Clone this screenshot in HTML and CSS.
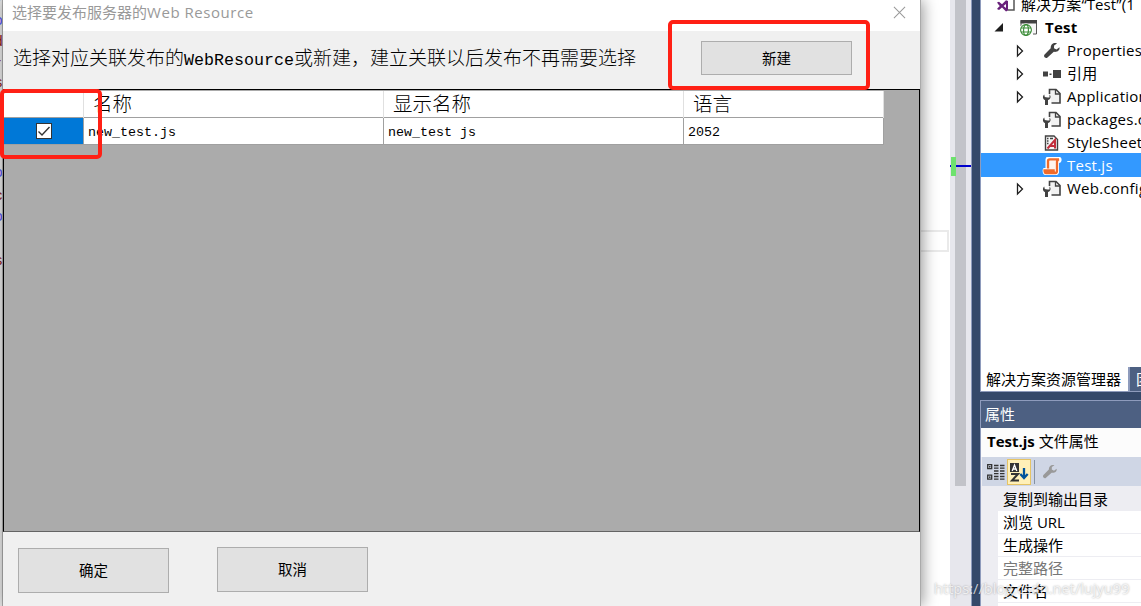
FILE: index.html
```
<!DOCTYPE html>
<html lang="zh-CN">
<head>
    <meta charset="UTF-8">
    <meta name="viewport" content="width=device-width, initial-scale=1.0">
    <title>Web Resource</title>
    <link rel="stylesheet" href="styles.css">
</head>
<body>
    <!-- shared icons -->
    <svg class="defs" width="0" height="0">
        <symbol id="arrow" viewBox="0 0 8 14"><path d="M1.500 2v10L6.500 7z" fill="#fff" stroke="#1e1e1e" stroke-width="1.300"/></symbol>
        <symbol id="wrench" viewBox="0 0 18 18"><path d="M16.500 5.300l-3 2.200-2.500-1.300.1-2.800L14 1.500c-3-1.300-6.500.8-6.300 4.700L1.600 12.500c-1.600 1.700.8 4.700 2.900 2.900l6.300-5.600c3.500.5 6.200-1.300 5.700-4.500z" fill="currentColor"/></symbol>
        <symbol id="config" viewBox="0 0 20 18">
            <path d="M7.500 6V1.500h6.500l4 4v9.500H9.500" fill="#f2f2f2" stroke="#424242" stroke-width="1.600"/>
            <path d="M13.500 1.500V6H18" fill="none" stroke="#424242" stroke-width="1.300"/>
            <path d="M2.200 6.500C0 8.500 1 11.500 3 12v5h3v-5c2.500-.5 3.500-3.500 1.500-5.500V9.500H5.800L4 9.300 2.800 9z" fill="#424242"/>
        </symbol>
    </svg>

    <div class="screen">
        <div class="code-left">
            <i class="red" style="top:-10px">v</i>
            <i class="blue" style="top:13px">o</i>
            <i class="red" style="top:34px">d</i>
            <i class="red" style="top:53px">-</i>
            <i class="red" style="top:75px">s</i>
            <i class="blue" style="top:165px">o</i>
            <i class="red" style="top:188px">c</i>
            <i class="blue" style="top:209px">o</i>
            <i class="red" style="top:253px">s</i>
        </div>

        <div class="dialog">
            <div class="titlebar">
                <span class="title">选择要发布服务器的<span class="title-en">Web Resource</span></span>
                <svg class="close" viewBox="0 0 14 14"><path d="M1 1l12 12M13 1L1 13" stroke="#999" stroke-width="1.100"/></svg>
            </div>
            <div class="toolbar">
                <span class="hint">选择对应关联发布的<span class="hint-en">WebResource</span>或新建，建立关联以后发布不再需要选择</span>
                <button class="btn btn-new">新建</button>
            </div>
            <div class="data-area">
                <table class="grid">
                    <tr><th class="check-col"></th><th>名称</th><th>显示名称</th><th class="lang-col">语言</th></tr>
                    <tr>
                        <td class="selected"><span class="checkbox"><svg viewBox="0 0 14 14"><path d="M1.500 7.500l3.500 3.500 7.500-8" fill="none" stroke="#333" stroke-width="1.400"/></svg></span></td>
                        <td>new_test.js</td><td>new_test js</td><td>2052</td>
                    </tr>
                </table>
            </div>
            <div class="footer">
                <button class="btn btn-ok">确定</button>
                <button class="btn btn-cancel">取消</button>
            </div>
        </div>

        <div class="editor">
            <div class="editor-page"><div class="current-line"></div></div>
            <div class="scrollbar"><div class="thumb"></div><div class="caret-mark"></div><div class="change-mark"></div></div>
        </div>
        <div class="splitter"></div>

        <div class="side">
            <div class="tree">
                <div class="node root">
                    <svg class="icon-vs" viewBox="0 0 20 18"><path d="M7 1.500h11V14h-6" fill="#fff" stroke="#555" stroke-width="1.500"/><path d="M1 6.500l2-.8 3 2.500 4-4 2 .8v9.500l-2 1-4-4-3 2.500-2-1 2.500-3z" fill="#68217a"/><path d="M2.300 8.700v2.600L3.700 10zM7.500 10l2.500 2V8z" fill="#fff"/></svg>
                    <span>解决方案“Test”(1</span>
                </div>
                <div class="node project">
                    <svg class="arrow-open" viewBox="0 0 9 9"><path d="M9 0v8.500H.5z" fill="#1e1e1e"/></svg>
                    <svg class="icon-web" viewBox="0 0 20 18"><path d="M2 7V1.500h15.500V15H14" fill="#f5f5f5" stroke="#555" stroke-width="1"/><path d="M1.500 1H18v3.500H1.500z" fill="#424242"/><circle cx="7" cy="11" r="6.500" fill="#fff"/><g fill="none" stroke="#388a34" stroke-width="1.100"><circle cx="7" cy="11" r="5.400"/><ellipse cx="7" cy="11" rx="2.400" ry="5.400"/><path d="M2 9h10M2 13h10"/></g></svg>
                    <b>Test</b>
                </div>
                <div class="node"><svg class="arrow"><use href="#arrow"/></svg><svg class="icon dark"><use href="#wrench"/></svg><span>Properties</span></div>
                <div class="node"><svg class="arrow"><use href="#arrow"/></svg><svg class="icon" viewBox="0 0 20 18"><path d="M1 6.500h5v5H1zM7.500 8.500h2v1.500h-2zM11 5h8v8h-8z" fill="#424242"/></svg><span>引用</span></div>
                <div class="node"><svg class="arrow"><use href="#arrow"/></svg><svg class="icon"><use href="#config"/></svg><span>ApplicationInsights.config</span></div>
                <div class="node"><i class="arrow"></i><svg class="icon"><use href="#config"/></svg><span>packages.config</span></div>
                <div class="node"><i class="arrow"></i><svg class="icon" viewBox="0 0 20 18"><path d="M3.500 2h8.500l3.500 3.500V16h-12z" fill="#f5f5f5" stroke="#424242" stroke-width="1.400"/><path d="M5 4.500h1.500M8 4.500h3M5 7h1.500M5 9.500h1.500" stroke="#424242" stroke-width="1.300"/><path d="M5.500 14.500L13 6v8.500M8 12h5" fill="none" stroke="#c22f3d" stroke-width="2"/></svg><span>StyleSheet1.css</span></div>
                <div class="node active"><i class="arrow"></i><svg class="icon" viewBox="0 0 20 18"><path d="M4.500 0H18c2.500 1 2 6-1 6v9.500c-.5 1.500-1 2.500-2.500 2.500H3C0 17.500 0 11.500 2 11h1.500V2z" fill="#fff"/><path d="M6 11.500V4c0-1 .8-1.600 1.700-1.600H17c-1.400.3-2 1.300-2 2.600v8.700c0 1.600-.5 2.300-1.600 2.300-1.500 0-1.800-.8-1.800-2.500H2.500c0 1.700.5 2.500 1.600 2.500h9" fill="#fff4ec" stroke="#f06b2b" stroke-width="2.300"/></svg><span>Test.js</span></div>
                <div class="node"><svg class="arrow"><use href="#arrow"/></svg><svg class="icon"><use href="#config"/></svg><span>Web.config</span></div>
            </div>
            <div class="tabs"><span class="tab current">解决方案资源管理器</span><span class="tab">团队资源管理器</span></div>
            <div class="props">
                <div class="props-title">属性</div>
                <div class="props-object"><b>Test.js</b> 文件属性</div>
                <div class="props-tools">
                    <svg class="tool-cat" viewBox="0 0 18 18"><g fill="none" stroke="#333" stroke-width="1.300"><path d="M.7 1.700h4v4h-4zM.7 12.200h4v4h-4z"/><path d="M2.700 3v1.500M2 3.700h1.500M2.700 13.500V15M2 14.200h1.500" stroke-width="1"/><path d="M7 2.500h4.500M13 2.500h4.500M7 5.200h4.500M13 5.200h4.500M7 8h4.500M13 8h4.500M7 10.700h4.500M13 10.700h4.500M7 13.500h4.500M13 13.500h4.500M7 16.200h4.500M13 16.200h4.500"/></g></svg>
                    <span class="tool-sort"><svg viewBox="0 0 20 20"><path d="M1 1h9v9H1z" fill="#333"/><path d="M3.200 9l2.300-6 2.300 6M4.200 7h2.600" fill="none" stroke="#fff" stroke-width="1.300"/><path d="M2 12h7l-6 6.500h7" fill="none" stroke="#333" stroke-width="2"/><path d="M15 6v10M11.300 12l3.700 4 3.700-4" fill="none" stroke="#00539c" stroke-width="2.300"/></svg></span>
                    <span class="tool-sep"></span>
                    <svg class="tool-wrench" viewBox="0 0 18 18"><use href="#wrench"/></svg>
                </div>
                <div class="props-list">
                    <div class="prop first">复制到输出目录</div>
                    <div class="prop">浏览 URL</div>
                    <div class="prop">生成操作</div>
                    <div class="prop readonly">完整路径</div>
                    <div class="prop">文件名</div>
                    <div class="prop"></div>
                </div>
            </div>
        </div>

        <div class="mark mark-new"></div>
        <div class="mark mark-check"></div>
        <div class="watermark">https://blog.csdn.net/lujyu99</div>
    </div>
</body>
</html>
```
FILE: styles.css
```
* {
    box-sizing: border-box;
}
body {
    margin: 0;
    font-family: "Open Sans", "Noto Sans CJK SC", sans-serif;
    font-size: 15px;
    color: #000;
}
.defs {
    position: absolute;
}
.screen {
    position: relative;
    display: flex;
    width: 1141px;
    height: 606px;
    overflow: hidden;
    background: #fff;
}

/* code behind the dialog */
.code-left {
    position: relative;
    width: 3px;
    flex: none;
    background: #e4e4e4;
    border-right: 1px solid #aaa;
    overflow: hidden;
}
.code-left i {
    position: absolute;
    right: -1px;
    font: 15px/18px "Liberation Mono", monospace;
}
.code-left .red {
    color: #8b2020;
}
.code-left .blue {
    color: #5555ee;
}

/* dialog */
.dialog {
    position: relative;
    z-index: 1;
    width: 918px;
    flex: none;
    display: flex;
    flex-direction: column;
    background: #f0f0f0;
    border-right: 1px solid #aaa;
    box-shadow: 2px 0 14px rgba(0, 0, 0, 0.4);
}
.titlebar {
    height: 31px;
    padding: 0 15px 6px 9px;
    display: flex;
    align-items: center;
    justify-content: space-between;
    background: #fff;
}
.title {
    color: #999;
    line-height: 20px;
    white-space: nowrap;
    padding-bottom: 1px;
}
.title-en {
    letter-spacing: 0.55px;
}
.close {
    width: 13px;
    height: 13px;
    margin-right: -1px;
}
.toolbar {
    height: 58px;
    padding: 0 68px 0 10px;
    display: flex;
    align-items: center;
    justify-content: space-between;
}
.hint {
    font-family: "Noto Sans CJK SC", sans-serif;
    font-size: 19px;
    font-weight: 300;
    line-height: 24px;
    white-space: nowrap;
    padding-bottom: 3px;
}
.hint-en {
    font-family: "Liberation Mono", monospace;
    font-size: 16.67px;
    font-weight: 400;
}
.btn {
    width: 151px;
    height: 45px;
    padding: 0 0 2px;
    border: 1px solid #adadad;
    background: #e1e1e1;
    color: #000;
    font: 14.5px "Noto Sans CJK SC", sans-serif;
}
.btn-new {
    height: 34px;
    margin-bottom: 4px;
}
.data-area {
    height: 443px;
    padding-top: 1px;
    background: #ababab;
    border: 1px solid #000;
    border-bottom-color: #646464;
}
.grid {
    width: 880px;
    margin-left: -1px;
    table-layout: fixed;
    border-collapse: collapse;
    background: #fff;
}
.grid th {
    width: 300px;
    height: 26px;
    padding: 0 0 1px 9px;
    border-right: 1px solid #e0e0e0;
    text-align: left;
    font: 300 19.5px/24px "Noto Sans CJK SC", sans-serif;
}
.grid .check-col {
    width: 80px;
}
.grid .lang-col {
    width: 200px;
}
.grid td {
    height: 27px;
    padding: 4px 0 0 4px;
    border: 1px solid #a0a0a0;
    border-left: none;
    font: 13.33px/20px "Liberation Mono", monospace;
}
.grid .selected {
    padding: 0;
    background: #0078d7;
    background-clip: padding-box;
    border-left: 1px solid #ababab;
    text-align: center;
}
.checkbox {
    display: block;
    width: 16px;
    height: 16px;
    margin: 0 auto;
    border: 1px solid #333;
    background: #fff;
}
.checkbox svg {
    display: block;
    width: 14px;
    height: 14px;
}
.footer {
    flex: 1;
    display: flex;
    gap: 48px;
    padding: 15px 15px 0;
}
.btn-ok {
    margin-top: 1px;
}

/* editor strip */
.editor {
    width: 51px;
    flex: none;
    display: flex;
    background: #fff;
    border-right: 1px solid #8e9bbc;
}
.editor-page {
    width: 29px;
    padding-top: 230px;
}
.current-line {
    width: 28px;
    height: 22px;
    border: 2px solid #eaeaea;
    border-left: none;
}
.scrollbar {
    position: relative;
    width: 21px;
    background: #e7e7ed;
}
.thumb {
    width: 11px;
    height: 486px;
    margin-left: 5px;
    background: #c2c3c9;
}
.caret-mark {
    position: absolute;
    top: 165px;
    left: 0;
    width: 21px;
    height: 2px;
    background: #0000cd;
}
.change-mark {
    position: absolute;
    top: 157px;
    left: 1px;
    width: 5px;
    height: 19px;
    background: #6ee26e;
}
.splitter {
    width: 8px;
    flex: none;
    background: #35496a;
}

/* solution explorer */
.side {
    flex: 1;
    min-width: 0;
    display: flex;
    flex-direction: column;
    background: #35496a;
}
.tree {
    height: 367px;
    flex: none;
    overflow: hidden;
    background: #fff;
    border-left: 1px solid #8e9bbc;
}
.node {
    display: flex;
    align-items: center;
    height: 23px;
    padding-left: 35px;
    line-height: 22px;
    white-space: nowrap;
    letter-spacing: 0.25px;
}
.node svg,
.node .arrow {
    flex: none;
}
.node span,
.node b {
    padding-bottom: 2px;
}
.node.root {
    margin-top: -7px;
    padding-left: 15px;
    letter-spacing: 0.1px;
}
.node.project {
    padding-left: 13px;
}
.node.active {
    color: #fff;
    background: #3399ff;
    box-shadow: 0 -1px #3399ff;
}
.arrow {
    width: 8px;
    height: 14px;
    margin-right: 18px;
}
.icon {
    width: 20px;
    height: 18px;
    margin-right: 5px;
}
.dark {
    color: #424242;
}
.icon-vs {
    width: 20px;
    height: 18px;
    margin-right: 5px;
}
.arrow-open {
    width: 9px;
    height: 9px;
    margin-right: 16px;
}
.icon-web {
    width: 20px;
    height: 18px;
    margin-right: 6px;
}
.tabs {
    display: flex;
    flex: none;
    height: 25px;
    margin-bottom: 8px;
    overflow: hidden;
}
.tab {
    flex: none;
    padding: 0 6px;
    color: #fff;
    background: #4d6082;
    border: 1px solid #8e9bbc;
    border-top: none;
    line-height: 24px;
    white-space: nowrap;
}
.tab.current {
    width: 149px;
    padding: 0 5px;
    color: #000;
    background: #fff;
}

/* properties */
.props {
    flex: 1;
    min-height: 0;
    overflow: hidden;
    background: #ededf2;
    border: solid #8e9bbc;
    border-width: 1px 0 0 1px;
}
.props-title {
    height: 27px;
    padding-left: 4px;
    color: #fff;
    background: #4d6082;
    line-height: 26px;
}
.props-object {
    height: 29px;
    padding-left: 6px;
    background: #fcfcfc;
    line-height: 27px;
    white-space: nowrap;
}
.props-tools {
    display: flex;
    align-items: center;
    height: 29px;
    margin-left: 1px;
    padding-left: 5px;
    background: #cfd6e5;
}
.tool-cat {
    width: 18px;
    height: 18px;
}
.tool-sort {
    display: flex;
    width: 24px;
    height: 26px;
    margin-left: 2px;
    padding: 2px 1px;
    background: #fff0b8;
    border: 1px solid #e5c365;
}
.tool-sep {
    width: 1px;
    height: 24px;
    margin: 0 7px 0 3px;
    background: #8591a2;
}
.tool-wrench {
    width: 16px;
    height: 16px;
    color: #999;
}
.props-list {
    margin-left: 17px;
}
.prop {
    height: 23px;
    padding-left: 5px;
    background: #fff;
    border-bottom: 1px solid #ededf2;
    line-height: 22px;
    white-space: nowrap;
}
.prop.first {
    height: 25px;
    background: #ededf2;
    line-height: 26px;
}
.prop.readonly {
    color: #777;
}

/* annotations over the windows */
.mark {
    position: absolute;
    z-index: 2;
    border: 4px solid #ff2015;
    border-radius: 5px;
}
.mark-new {
    left: 668px;
    top: 20px;
    width: 202px;
    height: 70px;
}
.mark-check {
    left: 0;
    top: 89px;
    width: 102px;
    height: 70px;
}
.watermark {
    position: absolute;
    z-index: 2;
    left: 934px;
    top: 578px;
    font: 14.6px/20px "Open Sans", sans-serif;
    color: rgba(255, 255, 255, 0.75);
    text-shadow: 0 0 2px rgba(0, 0, 0, 0.35);
}
```
